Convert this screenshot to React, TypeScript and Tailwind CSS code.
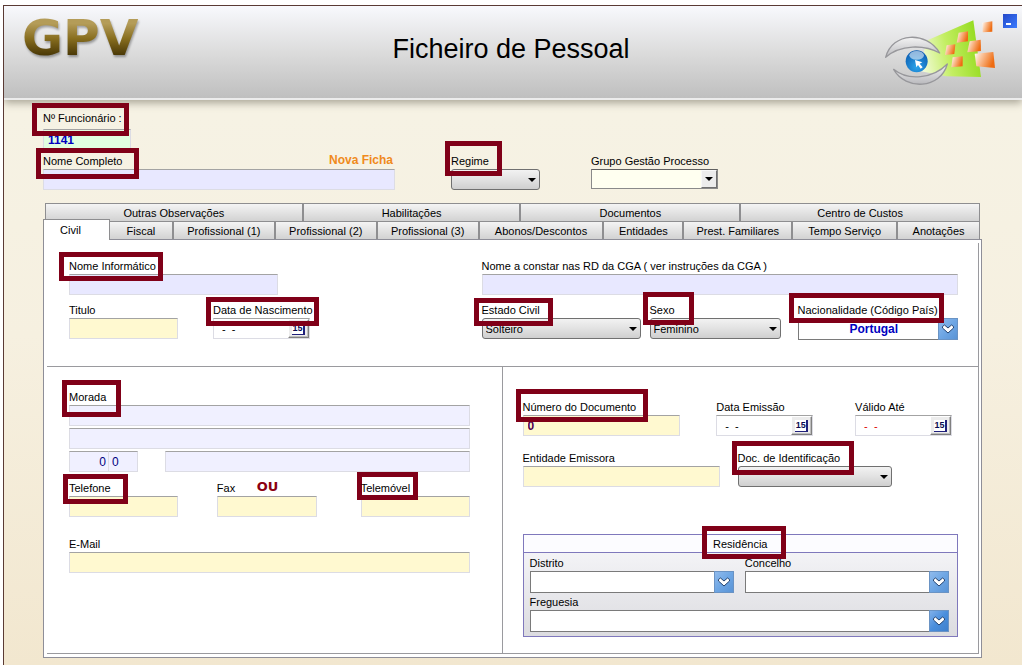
import { useId } from "react";
import type { ReactNode } from "react";

const UPPER_TABS = ["Outras Observações", "Habilitações", "Documentos", "Centro de Custos"];
const LOWER_TABS = [
  "Fiscal",
  "Profissional (1)",
  "Profissional (2)",
  "Profissional (3)",
  "Abonos/Descontos",
  "Entidades",
  "Prest. Familiares",
  "Tempo Serviço",
  "Anotações",
];

const SUNKEN = "h-[21px] w-full min-w-0 border border-[#dcdce4] border-t-[#a3a3a3] px-1 outline-none";
const LILAC = "bg-[#e8e8ff]";
const PALE_LILAC = "bg-[#f0f0ff]";
const YELLOW = "bg-[#fff9d0]";

/** Highlight frame drawn over a label; the place and size come from the classes. */
function Mark({ place }: { place: string }) {
  return (
    <span
      aria-hidden="true"
      className={`pointer-events-none absolute z-20 border-5 border-[#800018] ${place}`}
    />
  );
}

type FieldProps = {
  label: string;
  mark?: string;
  className?: string;
  children: (id: string) => ReactNode;
};

function Field({ label, mark, className = "", children }: FieldProps) {
  const id = useId();
  return (
    <div className={`flex min-w-0 flex-col ${className}`}>
      <div className="relative h-4">
        <label htmlFor={id} className="relative z-30 block whitespace-nowrap">
          {label}
        </label>
        {mark && <Mark place={mark} />}
      </div>
      {children(id)}
    </div>
  );
}

function GreySelect({ id, value }: { id: string; value: string }) {
  return (
    <div className="relative">
      <select
        id={id}
        defaultValue={value}
        className="block h-[21px] w-full appearance-none rounded-[3px] border border-[#707070] bg-linear-to-b from-[#f2f2f2] via-[#e2e2e2] to-[#cfcfcf] px-[3px] pr-5 outline-none"
      >
        <option value={value}>{value}</option>
      </select>
      <svg
        viewBox="0 0 8 4"
        className="pointer-events-none absolute top-[9px] right-1 h-1 w-2 fill-black"
        aria-hidden="true"
      >
        <path d="M0 0h8L4 4z" />
      </svg>
    </div>
  );
}

function BlueSelect({ id, value, strong }: { id: string; value: string; strong?: boolean }) {
  return (
    <div className="relative">
      <select
        id={id}
        defaultValue={value}
        className="block h-[22px] w-full appearance-none border border-[#7a7a7a] bg-white pr-4 pl-2 text-center text-[12px] font-bold text-[#0000c0] outline-none"
      >
        <option value={value}>{value}</option>
      </select>
      <span
        className={`pointer-events-none absolute inset-y-0 right-0 flex w-5 items-center justify-center border border-[#6a93c4] bg-linear-to-br ${
          strong ? "from-[#7fb0ea] via-[#4a8edc] to-[#3f80cc]" : "from-[#8fbaec] via-[#6ea6e4] to-[#5a94d6]"
        }`}
      >
        <svg viewBox="0 0 14 10" className="h-[10px] w-[14px]" aria-hidden="true">
          <path
            d="M1.500 2.500 3.500 1 7 4l3.500-3 2 1.500v1.500L7 9 1.500 4z"
            fill="#fff"
            stroke="#24426e"
            strokeWidth="1"
            strokeLinejoin="round"
          />
        </svg>
      </span>
    </div>
  );
}

function DateBox({ id, red }: { id: string; red?: boolean }) {
  return (
    <div className="flex h-[21px] w-[97px] border border-[#dcdce4] border-t-[#a3a3a3] bg-white">
      <input
        id={id}
        defaultValue="-  -"
        className={`min-w-0 flex-1 bg-transparent pl-2 whitespace-pre outline-none ${
          red ? "text-[#e00000]" : "text-black"
        }`}
      />
      <button
        type="button"
        aria-label="Abrir calendário"
        className="flex h-[19px] w-[21px] shrink-0 items-center justify-center border border-white border-r-[#808080] border-b-[#808080] bg-[#ececec] shadow-[inset_-1px_-1px_0_#bdbdbd]"
      >
        <span className="flex h-3 w-[13px] items-center justify-center border-r-2 border-b border-[#20207a] bg-white text-[9px] leading-none font-bold text-[#0a0a50]">
          15
        </span>
      </button>
    </div>
  );
}

function EyeLogo() {
  return (
    <svg viewBox="10 40 345 204" className="h-[68px] w-[115px]" aria-hidden="true">
      <defs>
        <linearGradient id="beam" x1="0" x2="1" y1="0.6" y2="0.4">
          <stop offset="0" stopColor="#f2fbd8" />
          <stop offset="0.45" stopColor="#c3ee62" />
          <stop offset="1" stopColor="#92da1c" />
        </linearGradient>
        <linearGradient id="tile" x1="0" x2="1" y1="0" y2="0.35">
          <stop offset="0" stopColor="#fff" />
          <stop offset="0.35" stopColor="#fbc9a4" />
          <stop offset="1" stopColor="#ee6c12" />
        </linearGradient>
        <linearGradient id="lid" x1="0" x2="0" y1="0" y2="1">
          <stop offset="0" stopColor="#f4f4f4" />
          <stop offset="1" stopColor="#b9b9bd" />
        </linearGradient>
        <radialGradient id="globe" cx="0.5" cy="0.75" r="0.75">
          <stop offset="0" stopColor="#2ba4ea" />
          <stop offset="1" stopColor="#0b5bb0" />
        </radialGradient>
      </defs>
      <path d="M140 108 281 47l23 170-104-2-80-16z" fill="url(#beam)" />
      <g fill="url(#tile)">
        <path d="M308 54l30-4v31l-29 2z" />
        <path d="M237 84l28-4v30l-34 4z" />
        <path d="M201 122l26-3-3 29-28 3z" />
        <path d="M270 110l33-5 1 34-41 4z" />
        <path d="M219 158l30-3v30l-34 3z" />
        <path d="M285 147l56-5 5 48-56-5z" />
      </g>
      <g fill="url(#lid)" stroke="#97979b" strokeWidth="4" strokeLinejoin="round">
        <path d="M18 158C38 82 140 78 180 145 135 120 62 118 18 158z" />
        <path d="M42 194C85 230 160 222 203 178 182 254 78 258 42 194z" />
      </g>
      <circle cx="111" cy="170" r="33" fill="url(#globe)" />
      <ellipse cx="111" cy="152" rx="22" ry="13" fill="#fff" opacity="0.55" />
      <path d="M106 166l22 7-8 4 9 11-6 4-8-11-5 7z" fill="#fff" />
    </svg>
  );
}

function Tab({ label }: { label: string }) {
  return (
    <button
      type="button"
      role="tab"
      aria-selected="false"
      className="h-full min-w-0 border-t border-r-2 border-[#8e8e90] bg-linear-to-b from-[#f4f4f4] to-[#d2d2d2] text-center whitespace-nowrap last:border-r"
    >
      {label}
    </button>
  );
}

export default function App() {
  return (
    <div className="min-h-screen bg-white pt-[5px] pl-[3px] font-['Liberation_Sans',Arial,sans-serif] text-[11px] leading-4 text-black">
      <div className="min-h-[660px] overflow-hidden border-t border-l border-[#5a3a34] bg-linear-to-b from-[#f6f3e6] via-[#f6f0e0] to-[#f2e7cf]">
        <header className="relative grid h-[94px] grid-cols-[1fr_auto_1fr] items-start border-b-2 border-[#ececec] bg-linear-to-b from-[#f8f9fd] via-[#dcdcdc] to-[#bfbfbf] shadow-[0_3px_8px_#a8a496]">
          <div className="pl-[18px] font-['DejaVu_Sans',Verdana,sans-serif] text-[50px] leading-[64px] font-bold drop-shadow-[1px_2px_1px_#00000055]">
            <span className="bg-linear-to-b from-[#b49c58] from-25% via-[#8a7020] via-50% to-[#4a3806] to-80% bg-clip-text text-transparent">
              GPV
            </span>
          </div>
          <h1 className="pt-[25px] pr-1 text-[27px] leading-9">Ficheiro de Pessoal</h1>
          <div className="flex items-start justify-end gap-[5px] pt-2 pr-[5px]">
            <div className="pt-1">
              <EyeLogo />
            </div>
            <button
              type="button"
              aria-label="Minimizar"
              className="flex h-[14px] w-[14px] items-end bg-linear-to-br from-[#2448c8] to-[#3c7cff] pb-[3px] pl-[3px]"
            >
              <span className="h-[2px] w-[5px] bg-white" />
            </button>
          </div>
        </header>

        <main className="pt-[10px] pr-10 pb-2 pl-[39px]">
          <div className="w-[88px]">
            <Field label="Nº Funcionário :" mark="-top-[7px] -left-[11px] h-[33px] w-[97px]">
              {(id) => (
                <input
                  id={id}
                  defaultValue="1141"
                  className={`${SUNKEN} mt-[3px] bg-[#e0ffe0] text-[12px] font-bold text-[#0000c0]`}
                />
              )}
            </Field>
          </div>

          <div className="mt-[3px] flex items-start">
            <div className="relative w-[352px]">
              <Field label="Nome Completo" mark="-top-[5px] -left-[7px] h-[31px] w-[103px]">
                {(id) => <input id={id} className={`${SUNKEN} ${LILAC}`} />}
              </Field>
              <span className="absolute -top-px right-[2px] text-[12px] font-bold text-[#f08a1c]">
                Nova Ficha
              </span>
            </div>
            <Field
              label="Regime"
              className="ml-14 w-[89px]"
              mark="-top-3 -left-[6px] h-[35px] w-[57px]"
            >
              {(id) => <GreySelect id={id} value="" />}
            </Field>
            <Field label="Grupo Gestão Processo" className="ml-[51px] w-[127px]">
              {(id) => (
                <div className="relative">
                  <select
                    id={id}
                    className="block h-5 w-full appearance-none border border-[#8a8a8a] border-t-[#606060] bg-[#fffff0] pr-5 outline-none"
                  >
                    <option value="" />
                  </select>
                  <span className="pointer-events-none absolute inset-y-px right-px flex w-4 items-center justify-center border border-[#f8f8f8] border-r-[#707070] border-b-[#707070] bg-[#ececec]">
                    <svg viewBox="0 0 8 4" className="h-1 w-2 fill-black" aria-hidden="true">
                      <path d="M0 0h8L4 4z" />
                    </svg>
                  </span>
                </div>
              )}
            </Field>
          </div>

          <div role="tablist" className="mt-[13px] pr-[2px]">
            <div className="ml-[2px] grid h-[18px] grid-cols-[258fr_218fr_220fr_239fr] border-l border-[#8e8e90]">
              {UPPER_TABS.map((label) => (
                <Tab key={label} label={label} />
              ))}
            </div>
            <div className="flex h-[18px] items-end">
              <button
                type="button"
                role="tab"
                aria-selected="true"
                className="relative z-10 -mb-px h-[21px] w-[67px] shrink-0 border border-b-0 border-[#8e8e90] bg-white pr-3"
              >
                Civil
              </button>
              <div className="grid h-[18px] flex-1 grid-cols-[64fr_102fr_102fr_102fr_125fr_80fr_109fr_105fr_82fr]">
                {LOWER_TABS.map((label) => (
                  <Tab key={label} label={label} />
                ))}
              </div>
            </div>
          </div>

          <div role="tabpanel" className="border border-[#8e8e98] bg-white pt-[3px] pr-[2px] pb-[3px] pl-[3px]">
            <div className="border-r border-b border-[#9a9a9e]">
              <section className="grid grid-cols-[413fr_477fr] gap-y-[7px] border-b border-[#9a9a9e] pt-[15px] pr-5 pb-[26px] pl-[22px]">
                <Field
                  label="Nome Informático"
                  className="w-[209px]"
                  mark="-top-[6px] -left-[10px] h-[29px] w-[104px]"
                >
                  {(id) => <input id={id} className={`${SUNKEN} ${LILAC}`} />}
                </Field>
                <Field label="Nome a constar nas RD da CGA ( ver instruções da CGA )">
                  {(id) => <input id={id} className={`${SUNKEN} ${LILAC}`} />}
                </Field>
                <div className="flex gap-[35px]">
                  <Field label="Titulo" className="w-[109px]">
                    {(id) => <input id={id} className={`${SUNKEN} ${YELLOW}`} />}
                  </Field>
                  <Field
                    label="Data de Nascimento"
                    className="w-[97px]"
                    mark="-top-[5px] -left-[7px] h-[29px] w-[113px]"
                  >
                    {(id) => <DateBox id={id} />}
                  </Field>
                </div>
                <div className="flex">
                  <Field
                    label="Estado Civil"
                    className="w-[159px]"
                    mark="-top-1 -left-2 h-7 w-[79px]"
                  >
                    {(id) => <GreySelect id={id} value="Solteiro" />}
                  </Field>
                  <Field
                    label="Sexo"
                    className="ml-[9px] w-[131px]"
                    mark="-top-[10px] -left-[7px] h-[33px] w-[51px]"
                  >
                    {(id) => <GreySelect id={id} value="Feminino" />}
                  </Field>
                  <Field
                    label="Nacionalidade (Código País)"
                    className="ml-[17px] flex-1"
                    mark="-top-[9px] -left-[9px] h-[30px] w-[155px]"
                  >
                    {(id) => <BlueSelect id={id} value="Portugal" />}
                  </Field>
                </div>
              </section>

              <div className="grid grid-cols-[455fr_477fr]">
                <section className="pt-[22px] pr-8 pb-20 pl-[22px]">
                  <Field label="Morada" mark="-top-[9px] -left-[7px] h-[37px] w-[59px]">
                    {(id) => <input id={id} className={`${SUNKEN} ${PALE_LILAC}`} />}
                  </Field>
                  <input aria-label="Morada, linha 2" className={`${SUNKEN} ${PALE_LILAC} mt-[2px] block`} />
                  <div className="mt-[2px] flex">
                    <input
                      aria-label="Código postal"
                      defaultValue="0"
                      className="h-[21px] w-10 border border-[#dcdce4] border-t-[#a3a3a3] bg-[#f0f0ff] pr-[2px] text-right text-[12px] text-[#000080] outline-none"
                    />
                    <input
                      aria-label="Código postal, extensão"
                      defaultValue="0"
                      className="h-[21px] w-[29px] border border-l-0 border-[#dcdce4] border-t-[#a3a3a3] bg-[#f0f0ff] pl-[3px] text-[12px] text-[#000080] outline-none"
                    />
                    <input aria-label="Localidade" className={`${SUNKEN} ${PALE_LILAC} ml-[27px] flex-1`} />
                  </div>
                  <div className="mt-2 grid grid-cols-[148fr_144fr_109fr]">
                    <Field
                      label="Telefone"
                      className="w-[109px]"
                      mark="-top-[6px] -left-[6px] h-[30px] w-[65px]"
                    >
                      {(id) => <input id={id} className={`${SUNKEN} ${YELLOW}`} />}
                    </Field>
                    <div className="relative w-[100px]">
                      <Field label="Fax">
                        {(id) => <input id={id} className={`${SUNKEN} ${YELLOW}`} />}
                      </Field>
                      <span className="absolute -top-px left-10 font-['DejaVu_Sans',Verdana,sans-serif] text-[13px] font-bold text-[#8b0010]">
                        OU
                      </span>
                    </div>
                    <Field label="Telemóvel" mark="-top-2 -left-1 h-7 w-[61px]">
                      {(id) => <input id={id} className={`${SUNKEN} ${YELLOW}`} />}
                    </Field>
                  </div>
                  <Field label="E-Mail" className="mt-[19px]">
                    {(id) => <input id={id} className={`${SUNKEN} ${YELLOW}`} />}
                  </Field>
                </section>

                <section className="border-l border-[#9a9a9e] pt-8 pr-5 pl-5">
                  <div className="grid grid-cols-[194fr_139fr_103fr]">
                    <Field
                      label="Número do Documento"
                      className="w-[157px]"
                      mark="-top-[10px] -left-[7px] h-[33px] w-[132px]"
                    >
                      {(id) => (
                        <input
                          id={id}
                          defaultValue="0"
                          className={`${SUNKEN} ${YELLOW} text-[12px] font-bold text-[#500050]`}
                        />
                      )}
                    </Field>
                    <Field label="Data Emissão">{(id) => <DateBox id={id} />}</Field>
                    <Field label="Válido Até">{(id) => <DateBox id={id} red />}</Field>
                  </div>
                  <div className="mt-[14px] flex gap-[18px]">
                    <Field label="Entidade Emissora" className="w-[197px]">
                      {(id) => <input id={id} className={`${SUNKEN} ${YELLOW}`} />}
                    </Field>
                    <Field
                      label="Doc. de Identificação"
                      className="w-[154px]"
                      mark="-top-[9px] -left-[6px] h-[34px] w-[122px]"
                    >
                      {(id) => <GreySelect id={id} value="" />}
                    </Field>
                  </div>

                  <div
                    role="group"
                    aria-label="Residência"
                    className="mt-[47px] border border-[#7f78bc] bg-linear-to-b from-[#f8f8fb] to-[#dcdce0]"
                  >
                    <div className="flex h-[18px] items-center justify-center border-b border-[#7f78bc] bg-[#fcfcff]">
                      <div className="relative">
                        <span className="relative z-30">Residência</span>
                        <Mark place="-top-[10px] -left-[11px] h-[33px] w-[84px]" />
                      </div>
                    </div>
                    <div className="grid grid-cols-2 gap-x-[11px] gap-y-px pt-[2px] pr-2 pb-1 pl-[6px]">
                      <Field label="Distrito">{(id) => <BlueSelect id={id} value="" />}</Field>
                      <Field label="Concelho">{(id) => <BlueSelect id={id} value="" />}</Field>
                      <Field label="Freguesia" className="col-span-2">
                        {(id) => <BlueSelect id={id} value="" strong />}
                      </Field>
                    </div>
                  </div>
                </section>
              </div>
            </div>
          </div>
        </main>
      </div>
    </div>
  );
}
